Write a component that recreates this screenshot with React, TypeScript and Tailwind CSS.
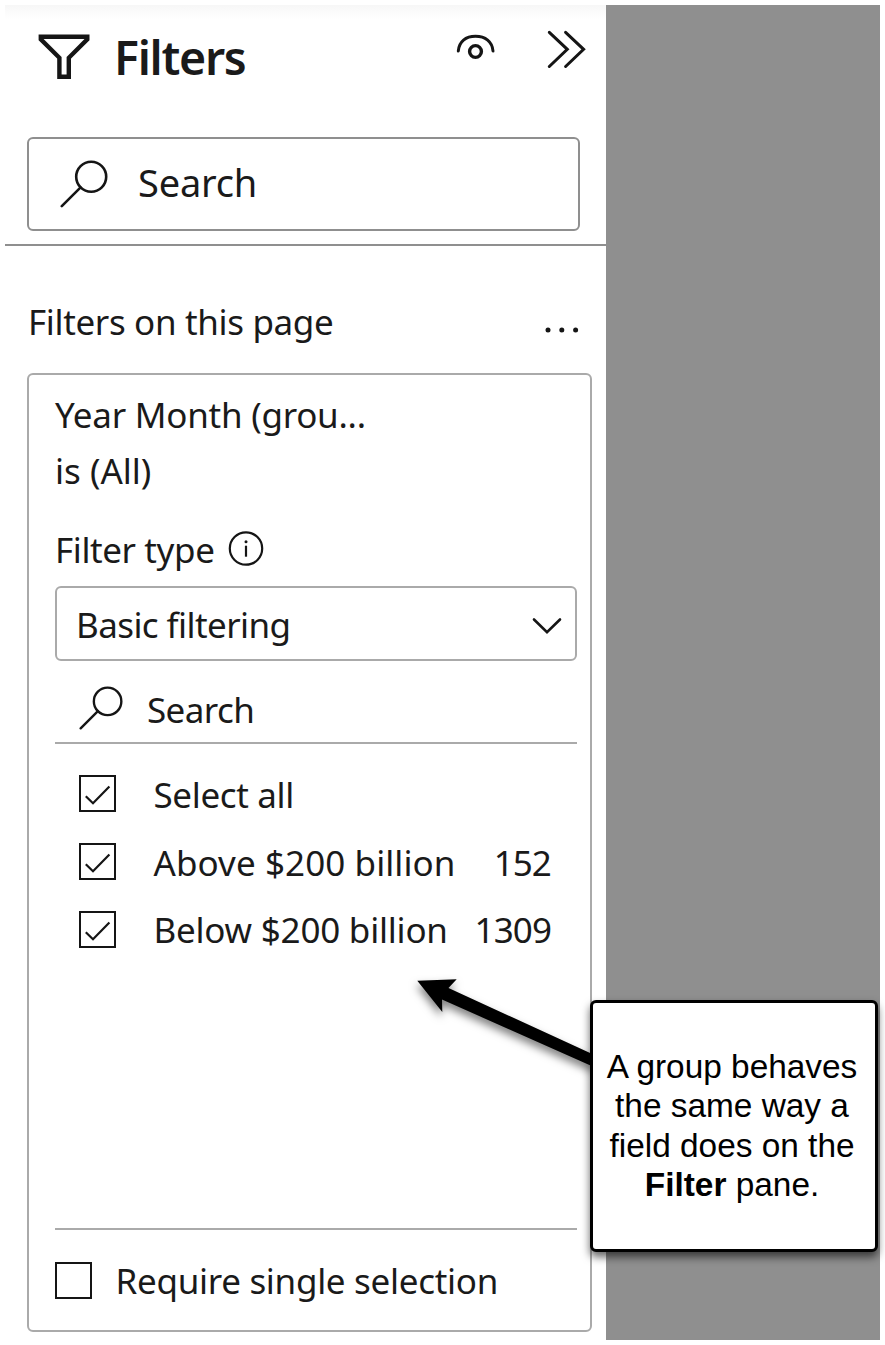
import React from "react";

function Magnifier({ className }: { className: string }) {
  return (
    <svg viewBox="0 0 48 48" className={className} fill="none" stroke="#151515" strokeWidth="2.6" strokeLinecap="round">
      <circle cx="31.2" cy="16.8" r="15" />
      <path d="M20.6 27.4 1.8 46.2" />
    </svg>
  );
}

function CheckBox({ checked, className = "" }: { checked?: boolean; className?: string }) {
  return (
    <span className={"block size-[37px] shrink-0 " + className}>
      {checked && (
        <svg viewBox="0 0 33 33" className="size-full" fill="none" stroke="#151515" strokeWidth="2.2">
          <path d="M4.8 19.2 12 26.2 28.4 9.4" />
        </svg>
      )}
    </span>
  );
}

const options = [
  { label: "Select all", count: "", style: "tracking-[-0.35px]" },
  { label: "Above $200 billion", count: "152", style: "tracking-[0.08px]" },
  { label: "Below $200 billion", count: "1309", style: "tracking-[-0.22px]" },
];

function Callout() {
  return (
    <div className="absolute left-[590px] top-[1000px] flex h-[252px] w-[288px] items-center justify-center rounded-[6px] border-[3px] border-black bg-white pr-[4px] pb-px text-center font-['Liberation_Sans',sans-serif] text-[33.4px] leading-[39.4px] text-black shadow-[0_5px_8px_rgba(0,0,0,0.6)]">
      <p className="whitespace-nowrap">
        A group behaves
        <br />
        the same way a
        <br />
        field does on the
        <br />
        <b>Filter</b> pane.
      </p>
    </div>
  );
}

export default function App() {
  return (
    <div className="relative flex h-[1345px] w-[885px] overflow-hidden bg-white p-[5px] font-['Noto_Sans',sans-serif] text-[35px] text-[#1a1a1a]">
      <aside className="flex h-[1335px] w-[601px] shrink-0 flex-col bg-linear-to-b from-[#f7f7f7] to-white to-[14px] whitespace-nowrap">
        <header className="flex h-[132px] items-start">
          <svg viewBox="0 0 52 46" className="mt-[29px] ml-[33px] h-[46px] w-[52px] shrink-0" fill="none" stroke="#151515" strokeWidth="4.4">
            <path d="M2.8 2.8H49.3V5.4L30.8 23.8V42.8H21.4V23.8L2.8 5.4Z" />
          </svg>
          <h1 className="ml-[24px] w-[200px] shrink-0 text-[46.5px] leading-[105px] font-semibold tracking-[-1.3px]">Filters</h1>
          <svg viewBox="0 0 40 28" className="mt-[28px] ml-[142px] h-[28px] w-[40px] shrink-0" fill="none" stroke="#151515" strokeWidth="3" strokeLinecap="round">
            <path d="M2.3 18C3 8.5 9.7 3.2 19.5 3.2S36.3 8.5 37 18" />
            <circle cx="19.5" cy="18.5" r="5.9" strokeWidth="3.4" />
          </svg>
          <svg viewBox="0 0 40 42" className="mt-[23px] ml-[50px] h-[42px] w-[40px] shrink-0" fill="none" stroke="#151515" strokeWidth="3" strokeLinecap="round">
            <path d="M3.3 4.3 21.3 21.3 3.3 38.5M19.6 4.3 37.6 21.3 19.6 38.5" />
          </svg>
        </header>

        <div className="ml-[22px] flex h-[94px] w-[553px] items-center rounded-[6px] border-2 border-[#8f8f8f] bg-white">
          <Magnifier className="ml-[31px] size-[48px]" />
          <span className="ml-[30px] pb-[4px] text-[38px] leading-[86px] tracking-[-0.2px]">Search</span>
        </div>
        <div className="mt-[13px] h-[2px] bg-[#8f8f8f]" />

        <div className="mt-[37px] flex h-[76px] items-center justify-between pr-[26px] pl-[23px]">
          <h2 className="pt-[3px] tracking-[-0.35px]">Filters on this page</h2>
          <svg viewBox="0 0 36 8" className="mt-[18px] h-[8px] w-[36px]" fill="#151515">
            <circle cx="4" cy="4" r="2.5" />
            <circle cx="17.8" cy="4" r="2.5" />
            <circle cx="31.6" cy="4" r="2.5" />
          </svg>
        </div>

        <section className="mt-[14px] ml-[22px] flex h-[959px] w-[565px] flex-col rounded-[6px] border-2 border-[#aaaaaa] bg-white pr-[13px] pl-[26px]">
          <div className="mt-[12px] leading-[55.5px]">
            <p className="tracking-[-0.25px]">Year Month (grou...</p>
            <p>is (All)</p>
          </div>
          <div className="mt-[23px] flex h-[56px] items-center">
            <span className="pt-[3px] tracking-[-0.4px]">Filter type</span>
            <svg viewBox="0 0 36 36" className="ml-[13px] size-[36px]" fill="none" stroke="#151515" strokeWidth="2.2">
              <circle cx="18" cy="17.5" r="16.2" />
              <path d="M18 14.7V25.7" />
              <circle cx="18" cy="10.7" r="1.5" fill="#151515" stroke="none" />
            </svg>
          </div>

          <div className="mt-[9px] flex h-[75px] shrink-0 items-center justify-between rounded-[6px] border-2 border-[#aaaaaa] pr-[13px] pl-[19px]">
            <span className="pt-[4px] tracking-[-0.58px]">Basic filtering</span>
            <svg viewBox="0 0 30 18" className="mt-[4px] h-[18px] w-[30px]" fill="none" stroke="#151515" strokeWidth="2.6" strokeLinecap="round">
              <path d="M2 2.5 15 15.3 28 2.5" />
            </svg>
          </div>

          <div className="flex h-[83px] shrink-0 items-start border-b-2 border-[#aaaaaa] pl-[24px]">
            <Magnifier className="mt-[25px] size-[44px]" />
            <span className="ml-[24px] leading-[97px] tracking-[-0.6px]">Search</span>
          </div>

          <ul className="mt-[16px]">
            {options.map((o) => (
              <li key={o.label} className="flex h-[67.7px] items-center pr-[26px] pl-[24px]">
                <CheckBox checked className="border-2 border-[#151515]" />
                <span className={"ml-[37.5px] pt-[3px] " + o.style}>{o.label}</span>
                <span className="ml-auto pt-[3px] tracking-[-0.9px]">{o.count}</span>
              </li>
            ))}
          </ul>

          <div className="mt-auto mb-[20px] flex h-[82px] items-center border-t-2 border-[#aaaaaa] pt-[20px]">
            <CheckBox className="border-[2.5px] border-[#151515]" />
            <span className="ml-[23.5px] pt-[3px] tracking-[-0.3px]">Require single selection</span>
          </div>
        </section>
      </aside>

      <main className="h-[1335px] flex-1 bg-[#8f8f8f]" />

      <svg viewBox="0 0 190 110" className="absolute left-[410px] top-[970px] h-[110px] w-[190px] drop-shadow-[-1px_5px_4px_rgba(0,0,0,0.5)]">
        <path d="M7.3 10.7 46.7 9.3 38.5 18 185 85.3V97.5L32 29.5 32.3 42Z" fill="#000" />
      </svg>
      <Callout />
    </div>
  );
}
